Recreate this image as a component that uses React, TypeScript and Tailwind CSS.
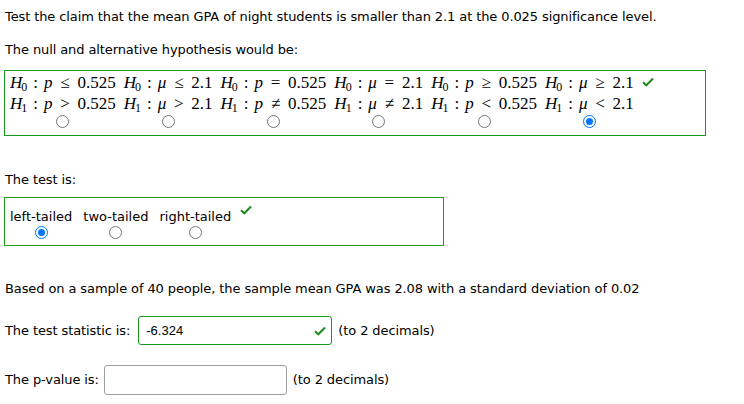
import React from 'react';

const sans = { fontFamily: '"DejaVu Sans", sans-serif' };
const serif = { fontFamily: '"Liberation Serif", "DejaVu Serif", serif' };

function Check({ className = '' }: { className?: string }) {
  return (
    <svg viewBox="0 0 12 10" className={`w-3 h-2.5 ${className}`} fill="none">
      <path d="M1 5.2 L4.3 8.3 L11 1.5" stroke="#1e8a1e" strokeWidth="2" />
    </svg>
  );
}

function Radio({ checked = false }: { checked?: boolean }) {
  return (
    <span
      className={`inline-block w-[13px] h-[13px] rounded-full border ${
        checked ? 'border-[#0075ff] bg-white p-[2px]' : 'border-[#767676] bg-white'
      }`}
    >
      {checked && <span className="block w-full h-full rounded-full bg-[#0075ff]" />}
    </span>
  );
}

type Hyp = { v: string; r0: string; r1: string; n: string };

const hyps: Hyp[] = [
  { v: 'p', r0: '≤', r1: '>', n: '0.525' },
  { v: 'μ', r0: '≤', r1: '>', n: '2.1' },
  { v: 'p', r0: '=', r1: '≠', n: '0.525' },
  { v: 'μ', r0: '=', r1: '≠', n: '2.1' },
  { v: 'p', r0: '≥', r1: '<', n: '0.525' },
  { v: 'μ', r0: '≥', r1: '<', n: '2.1' },
];

function MathLine({ sub, v, rel, n }: { sub: string; v: string; rel: string; n: string }) {
  return (
    <div className="flex items-baseline whitespace-nowrap leading-[20px]">
      <span className="italic">H</span>
      <span className="text-[12px] relative top-[3px] -ml-[1px]">{sub}</span>
      <span className="mx-[6px]">:</span>
      <span className="italic">{v}</span>
      <span className="mx-[6px] inline-block w-[13px] text-center">{rel}</span>
      <span>{n}</span>
    </div>
  );
}

export default function App() {
  return (
    <div className="w-[744px] h-[404px] bg-white text-[13px] text-black px-[5px] pt-[8px] tracking-[-0.1px]" style={sans}>
      <p className="leading-[18px]">
        Test the claim that the mean GPA of night students is smaller than 2.1 at the 0.025 significance level.
      </p>
      <p className="leading-[18px] mt-[15px]">The null and alternative hypothesis would be:</p>

      <div
        className="mt-[11px] w-[702px] h-[66px] border border-[#1a9a1a] -ml-px flex items-start pl-[5px] pt-[2px] text-[17px] tracking-normal"
        style={serif}
      >
        {hyps.map((h, i) => (
          <div key={i} className="flex flex-col items-center mr-[8px]">
            <div>
              <MathLine sub="0" v={h.v} rel={h.r0} n={h.n} />
              <MathLine sub="1" v={h.v} rel={h.r1} n={h.n} />
            </div>
            <div className="mt-0 flex">
              <Radio checked={i === 5} />
            </div>
          </div>
        ))}
        <Check className="mt-[4px]" />
      </div>

      <p className="leading-[18px] mt-[35px]">The test is:</p>

      <div className="mt-[8px] w-[440px] h-[49px] border border-[#1a9a1a] -ml-px flex items-start pl-[5px] pt-[11px] tracking-normal">
        {['left-tailed', 'two-tailed', 'right-tailed'].map((t, i) => (
          <div key={t} className="flex flex-col items-center mr-[11px]">
            <span className="leading-[16px]">{t}</span>
            <span className="mt-[1px] flex">
              <Radio checked={i === 0} />
            </span>
          </div>
        ))}
        <Check className="-mt-[4px] -ml-[2px]" />
      </div>

      <p className="leading-[18px] mt-[34px]">
        Based on a sample of 40 people, the sample mean GPA was 2.08 with a standard deviation of 0.02
      </p>

      <div className="mt-[18px] flex items-center">
        <span>The test statistic is:</span>
        <div className="ml-[8px] w-[194px] h-[29px] border border-[#1a9a1a] rounded-[3px] flex items-center justify-between px-[7px]">
          <span className="tracking-normal" style={{ fontFamily: '"Liberation Sans", Arial, sans-serif' }}>
            -6.324
          </span>
          <Check className="-mr-[2px]" />
        </div>
        <span className="ml-[6px]">(to 2 decimals)</span>
      </div>

      <div className="mt-[20px] flex items-center">
        <span>The p-value is:</span>
        <div className="ml-[5px] w-[183px] h-[30px] border border-[#a0a0a0] rounded-[3px]" />
        <span className="ml-[6px]">(to 2 decimals)</span>
      </div>
    </div>
  );
}
